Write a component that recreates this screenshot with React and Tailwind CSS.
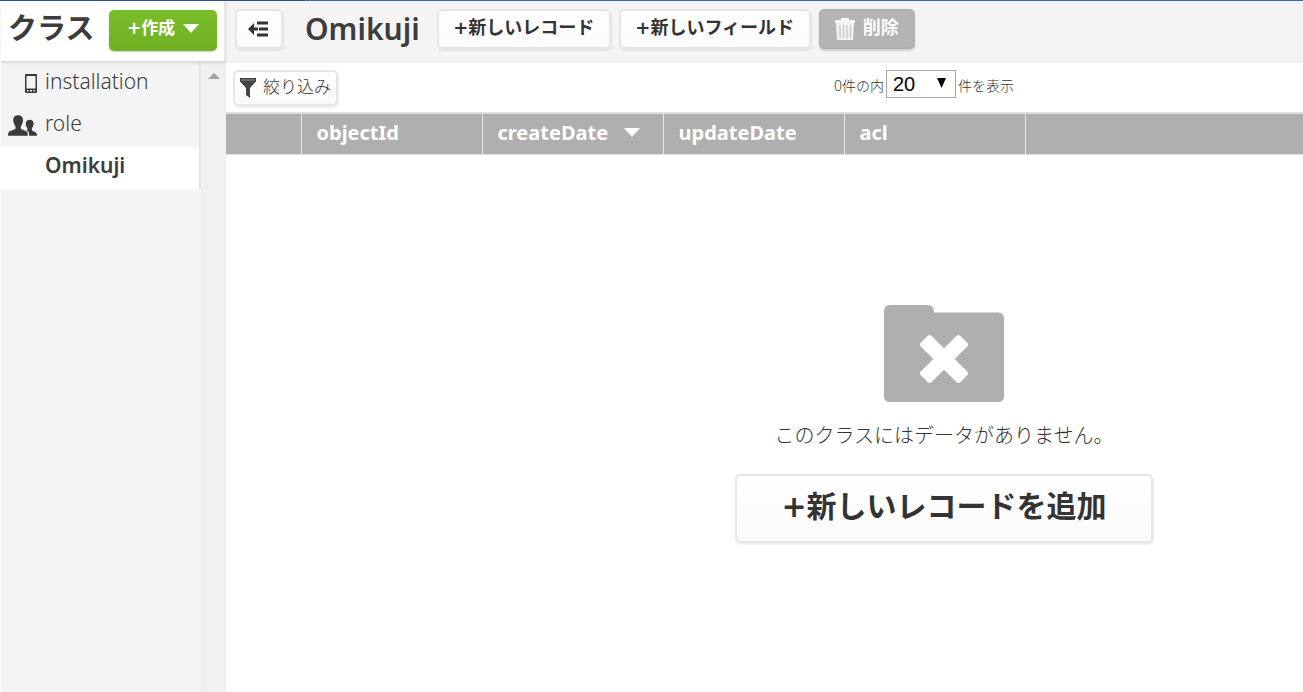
import React from "react";

const whiteButton =
  "shrink-0 rounded-[5px] border-2 border-[#e6e6e6] bg-linear-to-b from-white to-[#fafafa] text-[#333] shadow-[1px_2px_2px_rgba(0,0,0,0.07)]";

function Plus() {
  return <span className="font-['DejaVu_Sans',sans-serif]">+</span>;
}

function DownTriangle({ className }) {
  return (
    <svg className={className} width="16" height="9" viewBox="0 0 16 9" aria-hidden="true">
      <path d="M0 0H16L8 9Z" fill="currentColor" />
    </svg>
  );
}

function PhoneIcon() {
  return (
    <svg width="12" height="19" viewBox="0 0 12 19" aria-hidden="true">
      <path
        fillRule="evenodd"
        fill="#3a3a3a"
        d="M1 0H11Q12 0 12 1V18Q12 19 11 19H1Q0 19 0 18V1Q0 0 1 0ZM1.500 2V14.500H10.500V2ZM2 16V17.500H3.500V16ZM5 16V17.500H7V16ZM8.500 16V17.500H10V16Z"
      />
    </svg>
  );
}

function PeopleIcon() {
  return (
    <svg width="30" height="21" viewBox="0 0 30 21" fill="#3a3a3a" aria-hidden="true">
      <path d="M10.500 0C14 0 15.800 2.300 15.500 5.500C15.300 8.500 14 10 13.200 11.500V13.500C14 15 19 15.500 20 17.500Q20.500 19 20.500 21H0Q0 18.500 .8 17.300C2 15.500 7 15 7.800 13.500V11.500C7 10 5.700 8.500 5.400 5.500C5.200 2.300 7 0 10.500 0Z" />
      <path d="M22.500 4.500C25.300 4.500 26.800 6.500 26.500 9C26.300 11.300 25.300 12.500 24.700 13.500V15.300C25.500 16.500 28.500 16.800 29.300 18.200Q30 19.300 30 21H22C22 18 21 16 18.500 15.200Q20.300 15 20.300 13.500C19.500 12.500 18.500 11.300 18.400 9C18.200 6.500 19.700 4.500 22.500 4.500Z" />
    </svg>
  );
}

function CollapseIcon() {
  return (
    <svg width="20" height="16" viewBox="0 0 20 16" fill="#333" aria-hidden="true">
      <path d="M0 8L6 2V6.500H10V9.500H6V14Z" />
      <path d="M9 0.500H20V3.500H9ZM11 6.500H20V9.500H11ZM9 12.500H20V15.500H9Z" />
    </svg>
  );
}

function FunnelIcon() {
  return (
    <svg width="16" height="20" viewBox="0 0 16 20" aria-hidden="true">
      <path d="M0 0H16V3.500L10 10V20L6 17V10L0 3.500Z" fill="#444" />
      <path d="M1.500 2H14.500" stroke="#999" strokeWidth="1" />
    </svg>
  );
}

function TrashIcon() {
  return (
    <svg width="20" height="22" viewBox="0 0 20 22" aria-hidden="true">
      <path d="M6 0H14V2H19Q20 2 20 4V5H0V4Q0 2 1 2H6Z" fill="#f7f7f7" />
      <path d="M1 5H19L18 22H2Z" fill="#f2f2f2" />
      <path d="M5 7V20M8.500 7V20M12 7V20M15.500 7V20" stroke="#c4c4c4" strokeWidth="1.200" />
    </svg>
  );
}

function FolderIcon() {
  return (
    <svg width="120" height="97" viewBox="0 0 120 97" aria-hidden="true">
      <path
        d="M6 0H44Q50 0 50 7.500H114Q120 7.500 120 13.500V91Q120 97 114 97H6Q0 97 0 91V6Q0 0 6 0Z"
        fill="#afafaf"
      />
      <g fill="#fff" transform="translate(60 54)">
        <rect x="-28" y="-7.500" width="56" height="15" rx="3" transform="rotate(45)" />
        <rect x="-28" y="-7.500" width="56" height="15" rx="3" transform="rotate(-45)" />
      </g>
    </svg>
  );
}

function ClassLink({ icon, children, active }) {
  return (
    <li>
      <a
        href="#"
        aria-current={active ? "page" : undefined}
        className={
          active
            ? "flex h-[42px] items-center border-r-2 border-[#e4e4e4] bg-white pb-1 pl-[7px] text-[21px] font-semibold text-[#3c3c3c]"
            : "flex h-[42px] items-center border-r-2 border-[#e4e4e4] pb-1 pl-[7px] text-[21px] font-light text-[#3c3c3c]"
        }
      >
        <span className="mr-2 flex w-[29px] shrink-0 justify-end pt-[3px]">{icon}</span>
        {children}
      </a>
    </li>
  );
}

function Sidebar() {
  return (
    <aside className="flex w-[226px] shrink-0 flex-col border-l border-white">
      <div className="z-10 flex h-[60px] items-start justify-between border-r-2 border-[#e6e6e6] bg-white px-[7px] pt-[9px] shadow-[0_2px_3px_rgba(0,0,0,0.12)]">
        <h2 className="text-[29px] leading-9 font-bold text-[#3c3c3c]">クラス</h2>
        <button className="flex h-[41px] w-[108px] items-center justify-center gap-2 rounded-[5px] bg-linear-to-b from-[#7abd2a] to-[#70b022] pb-1 text-[17px] font-bold text-white shadow-[0_1px_2px_rgba(0,0,0,0.2)]">
          <span>
            <Plus />
            作成
          </span>
          <DownTriangle />
        </button>
      </div>
      <div className="flex flex-1">
        <nav className="flex-1 bg-[#f4f4f4]">
          <ul className="pt-0.5">
            <ClassLink icon={<PhoneIcon />}>installation</ClassLink>
            <ClassLink icon={<PeopleIcon />}>role</ClassLink>
            <ClassLink active>Omikuji</ClassLink>
          </ul>
        </nav>
        <div className="flex w-[25px] justify-center bg-[#f0f0f0] pt-3">
          <svg width="12" height="6" viewBox="0 0 12 6" aria-hidden="true">
            <path d="M0 6L6 0L12 6Z" fill="#a3a3a3" />
          </svg>
        </div>
      </div>
    </aside>
  );
}

function Toolbar() {
  return (
    <header className="flex h-[62px] items-start border-b-2 border-[#edf1f5] bg-[#f4f4f4] pl-[9px] pt-2">
      <button aria-label="サイドバーを閉じる" className={`${whiteButton} flex h-10 w-12 items-center justify-center pr-0.5`}>
        <CollapseIcon />
      </button>
      <h1 className="ml-[22px] mr-[17px] text-[30px] leading-10 font-semibold text-[#3c3c3c]">Omikuji</h1>
      <div className="flex gap-2">
        <button className={`${whiteButton} h-10 w-[174px] pb-1 text-lg leading-7 font-bold`}>
          <Plus />
          新しいレコード
        </button>
        <button className={`${whiteButton} h-10 w-48 pb-1 text-lg leading-7 font-bold`}>
          <Plus />
          新しいフィールド
        </button>
        <button className="flex h-10 w-24 shrink-0 items-center justify-center gap-2 rounded-[5px] border-2 border-[#b0b0b0] bg-[#b4b4b4] text-lg font-bold text-white shadow-[0_2px_2px_rgba(0,0,0,0.15)]">
          <TrashIcon />
          <span className="pb-1">削除</span>
        </button>
      </div>
    </header>
  );
}

function FilterBar() {
  return (
    <div className="flex h-[49px] items-start pl-[7px] pt-[7px]">
      <button className={`${whiteButton} flex h-9 w-[105px] items-center justify-center gap-[7px] text-[17px] font-light`}>
        <FunnelIcon />
        <span className="pb-0.5">絞り込み</span>
      </button>
      <div className="ml-[496px] flex items-center gap-0.5 text-sm font-light text-[#333]">
        <label htmlFor="page-size" className="pt-1">0件の内</label>
        <div className="relative">
          <select
            id="page-size"
            defaultValue="20"
            className="block h-7 w-[70px] appearance-none rounded-none border border-[#a6a6a6] bg-white pl-[6px] font-['Liberation_Sans',sans-serif] text-xl leading-6 font-normal text-black"
          >
            <option>20</option>
            <option>50</option>
            <option>100</option>
          </select>
          <svg className="pointer-events-none absolute right-[10px] top-2" width="9" height="10" viewBox="0 0 9 10" aria-hidden="true">
            <path d="M0 0H9L4.500 10Z" fill="#000" />
          </svg>
        </div>
        <span className="pt-1">件を表示</span>
      </div>
    </div>
  );
}

function DataTable() {
  const cell = "border-r border-[#e8e8e8] pb-0.5 pl-[15px] text-left";
  return (
    <table className="w-full table-fixed border-collapse border-t-2 border-b border-[#e0e0e0] bg-[#afafaf] text-xl text-white">
      <thead>
        <tr className="h-[41px]">
          <th className="w-[75px] border-r border-[#e8e8e8]" aria-label="選択" />
          <th className={`${cell} w-[181px]`}>objectId</th>
          <th className={`${cell} w-[181px]`}>
            <span className="flex items-center gap-4">
              createDate
              <DownTriangle />
            </span>
          </th>
          <th className={`${cell} w-[181px]`}>updateDate</th>
          <th className={`${cell} w-[181px]`}>acl</th>
          <th aria-hidden="true" />
        </tr>
      </thead>
    </table>
  );
}

function EmptyState() {
  return (
    <section className="flex flex-col items-center pl-[359px] pt-[150px]">
      <FolderIcon />
      <p className="mt-5 text-xl leading-7 font-light text-[#333]">このクラスにはデータがありません。</p>
      <button className={`${whiteButton} mt-6 h-[69px] w-[418px] pb-1 text-[30px] font-bold`}>
        <Plus />
        新しいレコードを追加
      </button>
    </section>
  );
}

export default function App() {
  return (
    <div className="flex min-h-screen flex-col bg-white font-['Noto_Sans','Noto_Sans_CJK_JP',sans-serif]">
      <div className="flex h-px">
        <div className="w-[305px] bg-[#2f5088]" />
        <div className="flex-1 bg-[#4169ad]" />
      </div>
      <div className="flex flex-1">
        <Sidebar />
        <main className="min-w-0 flex-1">
          <Toolbar />
          <FilterBar />
          <DataTable />
          <EmptyState />
        </main>
      </div>
    </div>
  );
}
